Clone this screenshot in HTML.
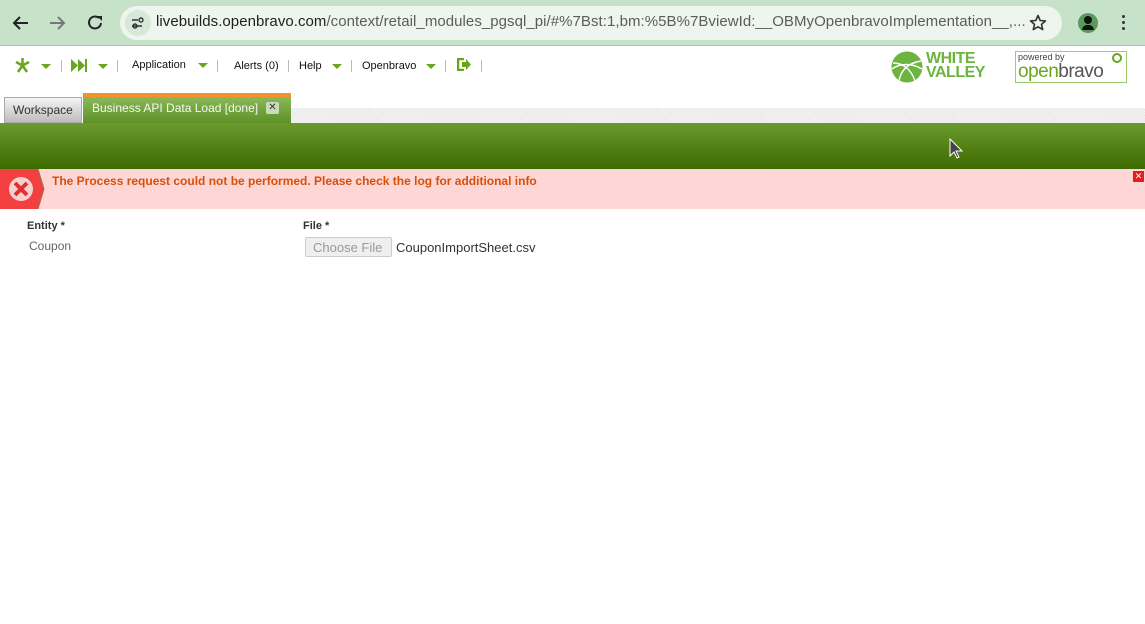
<!DOCTYPE html>
<html><head><meta charset="utf-8"><style>
*{margin:0;padding:0;box-sizing:border-box}
body{width:1145px;height:624px;overflow:hidden;background:#fff;font-family:"Liberation Sans",sans-serif;position:relative}
.abs{position:absolute}
.chrome{left:0;top:0;width:1145px;height:46px;background:#c6e2c9;border-bottom:1px solid #a9c9ac}
.url{left:120px;top:6px;width:942px;height:34px;border-radius:17px;background:#eef5ee}
.urltxt{left:156px;top:13px;font-size:15px;letter-spacing:0.05px;color:#1f1f1f;white-space:nowrap}
.urltxt span{color:#5c5c5c}
.tb{top:59px;font-size:11px;color:#111}
.sep{top:60px;width:1px;height:12px;background:#bbb}
.tri{width:0;height:0;border-left:5px solid transparent;border-right:5px solid transparent;border-top:5px solid #6aa51f}
.stripe{left:290px;top:108px;width:855px;height:15px;background:repeating-linear-gradient(45deg,#f6f6f6 0 1px,#e6e6e6 1px 2px)}
.gbar{left:0;top:123px;width:1145px;height:46px;background:linear-gradient(#6b9a2e,#3c6a00)}
.err{left:0;top:169px;width:1145px;height:40px;background:#ffd6d6}
</style></head><body>
<div class="abs chrome"></div>
<svg class="abs" style="left:12px;top:13px" width="100" height="20"><path d="M16 10H2M8 4L2 10l6 6" stroke="#222" stroke-width="2" fill="none"/><path d="M38 10h14M46 4l6 6-6 6" stroke="#777" stroke-width="2" fill="none"/><path d="M87 5a6 6 0 1 0 2 5" stroke="#222" stroke-width="2" fill="none"/><path d="M85 3h5v5z" fill="#222"/></svg>
<div class="abs url"></div>
<div class="abs" style="left:125px;top:10px;width:26px;height:26px;border-radius:13px;background:#d6e8d7"></div>
<svg class="abs" style="left:130px;top:15px" width="16" height="16"><path d="M2 5h6M2 11h10" stroke="#333" stroke-width="1.6"/><circle cx="11" cy="5" r="2" stroke="#333" fill="none" stroke-width="1.4"/><circle cx="5" cy="11" r="2" stroke="#333" fill="none" stroke-width="1.4"/></svg>
<div class="abs urltxt">livebuilds.openbravo.com<span>/context/retail_modules_pgsql_pi/#%7Bst:1,bm:%5B%7BviewId:__OBMyOpenbravoImplementation__,...</span></div>
<svg class="abs" style="left:1029px;top:14px" width="18" height="18"><path d="M9 1.5l2.2 5 5.3.4-4 3.5 1.2 5.2L9 12.8l-4.7 2.8 1.2-5.2-4-3.5 5.3-.4z" stroke="#333" stroke-width="1.6" fill="none" stroke-linejoin="round"/></svg>
<div class="abs" style="left:1078px;top:13px;width:20px;height:20px;border-radius:10px;background:#5a9a5e"></div>
<div class="abs" style="left:1084px;top:16px;width:8px;height:8px;border-radius:4px;background:#111"></div>
<div class="abs" style="left:1082px;top:25px;width:12px;height:5px;border-radius:6px 6px 0 0;background:#111"></div>
<div class="abs" style="left:1122px;top:15px;width:3px;height:3px;border-radius:2px;background:#333"></div>
<div class="abs" style="left:1122px;top:21px;width:3px;height:3px;border-radius:2px;background:#333"></div>
<div class="abs" style="left:1122px;top:27px;width:3px;height:3px;border-radius:2px;background:#333"></div>

<svg class="abs" style="left:14px;top:57px" width="17" height="17"><path d="M8.5 1v7.5M8.5 8.5L2 5M8.5 8.5L15 5M8.5 8.5L4 15M8.5 8.5L13 15" stroke="#6aa51f" stroke-width="2.5"/></svg>
<div class="abs tri" style="left:41px;top:64px"></div>
<div class="abs sep" style="left:61px"></div>
<svg class="abs" style="left:71px;top:59px" width="16" height="13"><path d="M0 0l7 6.5L0 13zM7 0l7 6.5L7 13z" fill="#6aa51f"/><rect x="14" y="0" width="2" height="13" fill="#6aa51f"/></svg>
<div class="abs tri" style="left:98px;top:64px"></div>
<div class="abs sep" style="left:117px"></div>
<div class="abs tb" style="left:132px">Application</div>
<div class="abs tri" style="left:198px;top:63px"></div>
<div class="abs sep" style="left:217px"></div>
<div class="abs tb" style="left:234px;top:60px">Alerts (0)</div>
<div class="abs sep" style="left:288px"></div>
<div class="abs tb" style="left:299px;top:60px">Help</div>
<div class="abs tri" style="left:332px;top:64px"></div>
<div class="abs sep" style="left:351px"></div>
<div class="abs tb" style="left:362px;top:60px">Openbravo</div>
<div class="abs tri" style="left:426px;top:64px"></div>
<div class="abs sep" style="left:445px"></div>
<svg class="abs" style="left:457px;top:58px" width="14" height="13"><path d="M7 1H1v11h6" stroke="#6aa51f" stroke-width="2.5" fill="none"/><path d="M5 4h4V1l5 5.5-5 5.5V9H5z" fill="#6aa51f"/></svg>
<div class="abs sep" style="left:481px"></div>

<svg class="abs" style="left:891px;top:51px" width="32" height="32"><circle cx="16" cy="16" r="15.5" fill="#6cb33f"/><path d="M1 18c8-6 20-6 30 0M8 30c2-12 10-18 22-20M2 12c10 0 18 6 22 18" stroke="#fff" stroke-width="1.4" fill="none"/></svg>
<div class="abs" style="left:926px;top:52px;font-size:16px;line-height:14px;font-weight:bold;color:#6cb33f;letter-spacing:-0.5px">WHITE<br>VALLEY</div>
<div class="abs" style="left:1015px;top:51px;width:112px;height:32px;border:1px solid #9ccc6c;background:#fff"></div>
<div class="abs" style="left:1018px;top:52px;font-size:9px;color:#444">powered by</div>
<div class="abs" style="left:1018px;top:61px;font-size:19px;letter-spacing:-0.5px;color:#6aa51f">open<span style="color:#555">bravo</span></div>
<div class="abs" style="left:1112px;top:53px;width:10px;height:10px;border:2px solid #6aa51f;border-radius:5px"></div>

<div class="abs stripe"></div>
<div class="abs" style="left:4px;top:97px;width:78px;height:26px;background:linear-gradient(#f4f4f4,#bdbdbd);border:1px solid #aaa;font-size:12px;color:#333;padding:5px 0 0 8px">Workspace</div>
<div class="abs" style="left:83px;top:93px;width:208px;height:30px;background:linear-gradient(#8bb85a,#5d9126);border-top:4px solid #f5912c;font-size:12px;color:#f4f9ee;padding:4px 0 0 9px">Business API Data Load [done]</div>
<div class="abs" style="left:266px;top:102px;width:13px;height:12px;background:#c8dcb6;border-radius:2px;font-size:10px;line-height:12px;text-align:center;color:#333">✕</div>
<div class="abs gbar"></div>
<svg class="abs" style="left:949px;top:138px" width="16" height="24"><path d="M1 1v17l4-4 3 6 2-1-3-6h6z" fill="#444" stroke="#fff" stroke-width="1"/></svg>

<div class="abs err"></div>
<svg class="abs" style="left:0;top:169px" width="46" height="40"><path d="M0 0h38l6 20-6 20H0z" fill="#f24040"/><path d="M38 0l6 20-6 20" stroke="#a0704a" fill="none"/><circle cx="21" cy="20" r="12" fill="#f7d0d0"/><path d="M15 14l12 12M27 14L15 26" stroke="#e03030" stroke-width="4"/></svg>
<div class="abs" style="left:52px;top:174px;font-size:12px;font-weight:bold;color:#d4500b">The Process request could not be performed. Please check the log for additional info</div>
<div class="abs" style="left:1133px;top:171px;width:11px;height:11px;background:#e02020;color:#fff;font-size:9px;line-height:11px;text-align:center">✕</div>

<div class="abs" style="left:27px;top:220px;font-size:11px;font-weight:bold;color:#333">Entity *</div>
<div class="abs" style="left:29px;top:239px;font-size:12px;color:#666">Coupon</div>
<div class="abs" style="left:303px;top:220px;font-size:11px;font-weight:bold;color:#333">File *</div>
<div class="abs" style="left:305px;top:237px;width:87px;height:20px;border:1px solid #ccc;background:#efefef;border-radius:2px;font-size:13px;color:#999;padding:2px 0 0 7px">Choose File</div>
<div class="abs" style="left:396px;top:240px;font-size:13px;color:#333">CouponImportSheet.csv</div>
</body></html>
